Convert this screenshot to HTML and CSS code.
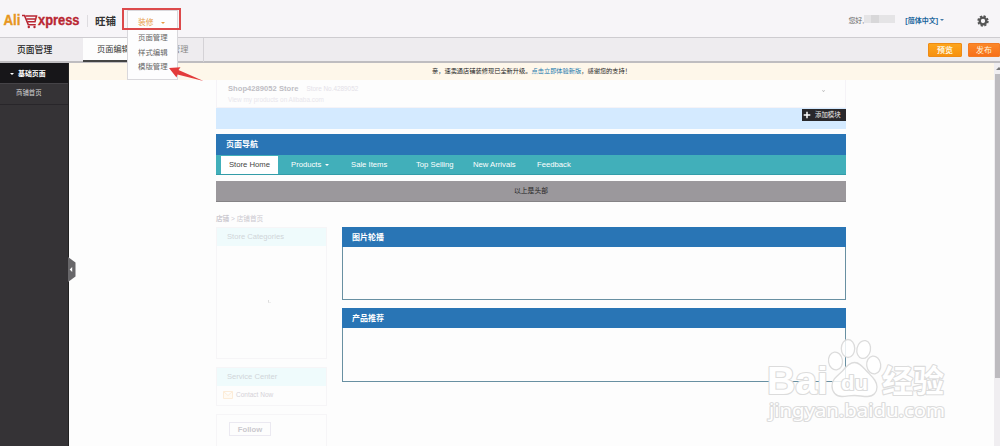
FILE: index.html
```html
<!DOCTYPE html>
<html lang="zh-CN">
<head>
<meta charset="utf-8">
<title>AliExpress 旺铺</title>
<link rel="stylesheet" href="styles.css">
</head>
<body>
<div class="app">
  <header class="top">
    <svg class="logo" width="78" height="20" viewBox="0 0 78 20" role="img" aria-label="AliExpress">
      <text class="logo-ali" x="0.5" y="13.5" textLength="17" lengthAdjust="spacingAndGlyphs">Ali</text>
      <g fill="none" stroke="#b92632">
        <path d="M19 4.500h2.500l3.800 9.300h7.500" stroke-width="1.6"/>
        <path d="M22.500 5H33.500l-1.500 5.800h-7.500M23.500 7.900h9" stroke-width="1.5"/>
      </g>
      <circle cx="25.800" cy="16" r="1.200" fill="#b92632"/><circle cx="31.500" cy="16" r="1.200" fill="#b92632"/>
      <text class="logo-express" x="35" y="13.500" textLength="41.500" lengthAdjust="spacingAndGlyphs">xpress</text>
    </svg>
    <span class="brand">旺铺</span>
    <span class="spacer"></span>
    <span class="hello">您好,</span><span class="masked"><i></i></span>
    <span class="lang">[简体中文]</span><i class="caret lang-caret"></i>
    <svg class="gear" width="12" height="12" viewBox="0 0 12 12">
      <circle cx="6" cy="6" r="4.900" fill="none" stroke="#555" stroke-width="1.600" stroke-dasharray="2.200 1.650"/>
      <circle cx="6" cy="6" r="3.300" fill="none" stroke="#555" stroke-width="2.300"/>
    </svg>
  </header>

  <nav class="toolbar">
    <span class="section">页面管理</span>
    <span class="tab active">页面编辑</span>
    <span class="tab second">管理</span>
    <span class="spacer"></span>
    <button class="btn preview">预览</button>
    <button class="btn publish">发布</button>
  </nav>

  <div class="body">
    <aside class="side">
      <div class="side-title"><i class="caret"></i>基础页面</div>
      <div class="side-item">商铺首页</div>
      <svg class="handle" width="8" height="27" viewBox="0 0 8 27"><path d="M0 1l7.500 5.500v14L0 26z" fill="#68676a"/><path d="M4.200 11v5L1.700 13.500z" fill="#fff"/></svg>
    </aside>
    <main class="main">
      <div class="notice">亲，速卖通店铺装修现已全新升级。<a>点击立即体验新版</a>，感谢您的支持！</div>
      <div class="canvas">
        <section class="shop">
          <div><b>Shop4289052 Store</b><span class="shop-no">Store No.4289052</span></div>
          <div class="shop-link">View my products on Alibaba.com</div>
          <i class="chevron"></i>
        </section>
        <div class="drop"><span class="add"><svg width="8" height="8" viewBox="0 0 8 8"><path d="M4 .7v6.600M.7 4h6.600" stroke="#fff" stroke-width="1.500"/></svg>添加模块</span></div>
        <h2 class="bar nav-head">页面导航</h2>
        <div class="store-nav">
          <span class="home">Store Home</span>
          <span class="products">Products<i class="caret"></i></span>
          <span class="sale">Sale Items</span>
          <span class="selling">Top Selling</span>
          <span class="arrivals">New Arrivals</span>
          <span class="feedback">Feedback</span>
        </div>
        <div class="head-end">以上是头部</div>
        <div class="columns">
          <div class="left">
            <div class="crumb"><b>店铺</b> &gt; 店铺首页</div>
            <div class="card categories"><h3>Store Categories</h3><i class="loading"></i></div>
            <div class="card service"><h3>Service Center</h3>
              <div class="contact"><svg width="10" height="8" viewBox="0 0 10 8"><path d="M.5.5h9v7h-9zl4.500 4 4.500-4" fill="#fffaf3" stroke="#fcecd8"/></svg>Contact Now</div>
            </div>
            <div class="card follow"><span>Follow</span></div>
          </div>
          <div class="right">
            <section class="module"><h2 class="bar">图片轮播</h2></section>
            <section class="module"><h2 class="bar">产品推荐</h2></section>
          </div>
        </div>
      </div>
    </main>
    <div class="scroll"><i class="up"></i><i class="thumb"></i></div>
  </div>

  <div class="menu">
    <span class="menu-title">装修<i class="caret"></i></span>
    <span>页面管理</span><span>样式编辑</span><span>模版管理</span>
  </div>
  <div class="highlight"></div>
  <svg class="arrow" width="36" height="16" viewBox="0 0 36 16"><path d="M0 1l11.500-.7-2 2.700L34.500 14 8.500 7.500 7.500 10.500z" fill="#e33b3b"/></svg>

  <svg class="watermark" width="190" height="92" viewBox="0 0 190 92">
    <g fill="#fff" fill-opacity=".85" stroke="#dcdcdc" stroke-width="1.300" stroke-linejoin="round">
      <text class="wm-bai" x="7" y="56.500" textLength="61" lengthAdjust="spacingAndGlyphs">Bai</text>
      <ellipse cx="75.500" cy="24" rx="7" ry="9" transform="rotate(-8 75.500 24)"/>
      <ellipse cx="88" cy="11.500" rx="6.700" ry="9"/>
      <ellipse cx="103.700" cy="12.500" rx="6.800" ry="9" transform="rotate(12 103.700 12.500)"/>
      <ellipse cx="113.700" cy="28" rx="7" ry="9" transform="rotate(-8 113.700 28)"/>
      <path d="M94.500 25.500c-5 0-8.500 4-12 8.500-5 5-10.500 8-10.500 15 0 6 4 10.500 10 10.500 5 0 8-1 12.500-1s8 1 13 1c6 0 9.500-4 9.500-9.500 0-7-6-11-10.500-16-4-4.500-7-8.500-12-8.500z"/>
      <text class="wm-du" x="81" y="52.500" textLength="27" lengthAdjust="spacingAndGlyphs">du</text>
      <text class="wm-cn" x="122" y="54.500" textLength="62" lengthAdjust="spacingAndGlyphs">经验</text>
      <text class="wm-url" x="9" y="80" textLength="176" lengthAdjust="spacingAndGlyphs">jingyan.baidu.com</text>
    </g>
  </svg>
</div>
</body>
</html>
```
FILE: styles.css
```css
* { box-sizing: border-box; }
body { margin: 0; font: 7px/1 "Liberation Sans", "Noto Sans CJK SC", sans-serif; color: #333; }
.app { position: relative; width: 1000px; height: 446px; overflow: hidden; background: #fdfdfd; display: flex; flex-direction: column; }
.spacer { flex: 1; }
h2, h3 { margin: 0; }
.caret { display: inline-block; width: 0; height: 0; border: 2px solid transparent; border-top-color: currentColor; border-bottom: 0; }

.top { height: 38px; flex: none; display: flex; align-items: center; padding: 4px 11px 0 3px; background: #f7f5f8; border-bottom: 1px solid #ceccd0; }
.logo { flex: none; margin-top: 1px; overflow: visible; }
.logo text { font: bold 14.5px "Liberation Sans", sans-serif; stroke-width: .35px; }
.logo-ali { fill: #e79620; stroke: #e79620; }
.logo-express { fill: #b92632; stroke: #b92632; }
.brand { margin-left: 6px; padding-left: 7px; border-left: 1px solid #dedce0; font-size: 10.5px; line-height: 12px; font-weight: 700; color: #333; }
.hello { font-size: 7px; line-height: 11px; color: #666; }
.masked { width: 31px; height: 8px; margin-top: -3px; background: #e5e4e6; }
.masked i { display: block; width: 8px; height: 8px; margin-left: 7px; background: #d8d7d9; }
.lang { margin-left: 10px; font-size: 7px; line-height: 11px; font-weight: 700; color: #1a659c; white-space: nowrap; }
.lang-caret { margin-left: 2px; margin-top: -2px; color: #447caa; }
.gear { margin-left: 33px; }

.toolbar { height: 25px; flex: none; display: flex; align-items: center; background: #eeecef; border-bottom: 2px solid #bfbdc0; }
.section { width: 83px; padding-left: 17px; font-size: 8.8px; line-height: 12px; font-weight: 500; color: #222; }
.tab { height: 24px; padding: 7px 0 0 14px; font-size: 8.2px; line-height: 10px; border-right: 1px solid #d4d2d6; white-space: nowrap; }
.active { width: 61px; background: #fdfdfd; border-bottom: 2px solid #444; color: #333; }
.second { width: 60px; padding-left: 28px; color: #888; }
.btn { height: 14px; padding: 0; border: 1px solid #ef8b14; border-radius: 1px; color: #fff4dd; font: 700 8px/12px "Noto Sans CJK SC", sans-serif; }
.preview { width: 34px; margin-right: 6px; background: linear-gradient(#fda51d, #f7910f); }
.publish { width: 32px; font-weight: 400; background: linear-gradient(#fb8728, #f7701a); border-color: #f37a22; }

.body { flex: 1; display: flex; min-height: 0; }
.side { position: relative; width: 69px; background: #353336; border-right: 1px solid #222; color: #d6d6d6; }
.side-title { height: 20px; display: flex; align-items: center; gap: 4px; padding: 2px 0 0 10px; background: #171619; color: #fff; font-size: 6.9px; font-weight: 700; }
.side-item { height: 22px; padding: 6px 0 0 16px; border-top: 1px solid #454347; border-bottom: 1px solid #28262a; font-size: 6.4px; }
.handle { position: absolute; left: 68px; top: 193px; }
.main { flex: 1; min-width: 0; }
.notice { height: 17px; padding: 5px 0 0; text-align: center; font-size: 6.22px; color: #222; background: #fef7ea; }
.notice a { color: #2479ad; }
.canvas { width: 630px; margin-left: 147px; }
.shop { position: relative; height: 28px; padding: 4px 0 0 11px; border: 1px solid #f5f3f7; border-top: 0; font-size: 7.6px; color: #c0bec4; line-height: 9px; }
.shop b { letter-spacing: .02px; }
.shop-no { margin-left: 8px; font-size: 6.4px; color: #e4e1e8; }
.shop-link { margin-top: 2px; font-size: 6.4px; color: #e8e6ec; }
.chevron { position: absolute; right: 20px; top: 9px; width: 3px; height: 3px; border: solid #bbb; border-width: 0 1px 1px 0; transform: rotate(45deg) scale(.7); }
.drop { height: 21px; display: flex; justify-content: flex-end; background: #d4eaff; }
.add { width: 44px; height: 12px; margin-top: 1px; display: flex; align-items: center; gap: 4px; padding-left: 1px; background: #29282b; color: #eee; font-size: 6.4px; }
.bar { height: 21px; padding: 6px 0 0 10px; background: #2975b5; color: #fff; font-size: 8px; line-height: 9px; font-weight: 700; }
.nav-head { margin-top: 5px; }
.store-nav { height: 20px; display: flex; align-items: center; background: #41afba; border-bottom: 1px solid #339ca8; color: #fff; font-size: 7.7px; }
.home { width: 57px; height: 18px; margin: 1px 13px 0 5px; padding-top: 5px; background: #fff; color: #444; text-align: center; }
.products { width: 60px; }
.products .caret { margin-left: 4px; vertical-align: 1px; }
.sale { width: 65px; }
.selling { width: 57px; }
.arrivals { width: 64px; }
.head-end { height: 21px; margin-top: 6px; padding-top: 7px; background: #9b989c; border-bottom: 1px solid #858386; color: #222; text-align: center; font-size: 6.8px; }
.columns { display: flex; justify-content: space-between; padding-top: 13px; }
.left { width: 111px; color: #d5d2d8; }
.crumb { height: 12px; padding-top: 1px; font-size: 6.6px; color: #ccc9d0; }
.card { border: 1px solid #f6f5f7; }
.card h3 { height: 18px; padding: 5px 0 0 10px; background: #effbfc; color: #cfd5d9; font-size: 7.6px; font-weight: 400; }
.categories { height: 132px; }
.loading { display: block; width: 3px; height: 3px; margin: 54px 0 0 51px; border-left: 1px solid #ddd; border-bottom: 1px solid #eee; }
.service { height: 39px; margin-top: 8px; }
.contact { display: flex; align-items: center; gap: 3px; padding: 5px 0 0 6px; font-size: 6.5px; }
.follow { height: 50px; margin-top: 8px; padding: 7px 0 0 12px; }
.follow span { display: block; width: 42px; height: 14px; padding-top: 3px; border: 1px solid #ebe9f1; text-align: center; font-size: 7.7px; font-weight: 700; color: #cbc9ce; }
.right { width: 504px; padding-top: 12px; display: flex; flex-direction: column; gap: 8px; }
.module { height: 73px; border: 1px solid #6890a2; border-top: 0; }
.module .bar { margin: 0 -1px; height: 20px; }
.module + .module { height: 74px; }
.scroll { width: 6px; background: #f0eef1; padding-top: 4px; }
.up { display: block; height: 3px; width: 0; margin-left: 2px; border-left: 3px solid transparent; border-right: 3px solid transparent; border-bottom: 3px solid #777; }
.thumb { display: block; height: 304px; margin-top: 4px; margin-left: 1px; background: #bdbbbf; }

.menu { position: absolute; left: 127px; top: 10px; width: 51px; height: 70px; display: flex; flex-direction: column; padding-left: 10px; background: #fdfdfe; border: 1px solid #d9d8dc; font-size: 7.4px; line-height: 14.7px; color: #666; }
.menu-title { padding-top: 5px; height: 20px; color: #e79b42; font-size: 7.8px; }
.menu-title .caret { margin-left: 7px; vertical-align: 1px; }
.highlight { position: absolute; left: 122px; top: 8px; width: 59px; height: 22px; border: 2px solid #dc494b; }
.arrow { position: absolute; left: 169px; top: 67px; }
.watermark { position: absolute; left: 760px; top: 337px; }
.watermark text { paint-order: stroke; stroke-width: 2.2px; fill-opacity: 1; }
.wm-bai { font: bold 39px "Liberation Sans", sans-serif; }
.wm-du { font: bold 20px "Liberation Sans", sans-serif; }
.wm-cn { font: 700 31px "Noto Sans CJK SC", sans-serif; }
.wm-url { font: 400 18.5px "Noto Sans", sans-serif; }
```
